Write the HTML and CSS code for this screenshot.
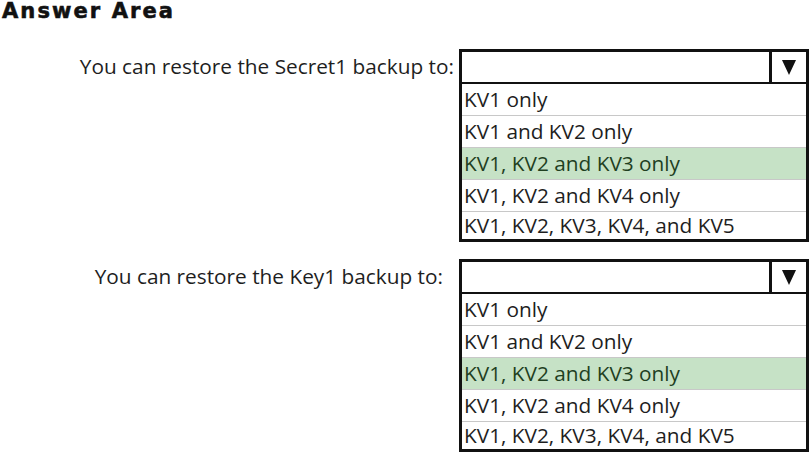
FILE: index.html
```html
<!DOCTYPE html>
<html>
<head>
<meta charset="utf-8">
<link rel="stylesheet" href="styles.css">
</head>
<body>
<div class="page">
  <h1 class="title">Answer Area</h1>
  <div class="row row-first">
    <div class="label label-1">You can restore the Secret1 backup to:</div>
    <div class="box">
      <div class="head">
        <div class="head-field"></div>
        <div class="head-btn"><span class="tri"></span></div>
      </div>
      <div class="opt">KV1 only</div>
      <div class="opt">KV1 and KV2 only</div>
      <div class="opt sel">KV1, KV2 and KV3 only</div>
      <div class="opt">KV1, KV2 and KV4 only</div>
      <div class="opt last">KV1, KV2, KV3, KV4, and KV5</div>
    </div>
  </div>
  <div class="row row-second">
    <div class="label label-2">You can restore the Key1 backup to:</div>
    <div class="box">
      <div class="head">
        <div class="head-field"></div>
        <div class="head-btn"><span class="tri"></span></div>
      </div>
      <div class="opt">KV1 only</div>
      <div class="opt">KV1 and KV2 only</div>
      <div class="opt sel">KV1, KV2 and KV3 only</div>
      <div class="opt">KV1, KV2 and KV4 only</div>
      <div class="opt last">KV1, KV2, KV3, KV4, and KV5</div>
    </div>
  </div>
</div>
</body>
</html>
```

FILE: styles.css
```css
html, body {
  margin: 0;
  padding: 0;
  background: #ffffff;
}
.page {
  width: 811px;
  height: 455px;
  overflow: hidden;
  font-family: "Open Sans", "Noto Sans", sans-serif;
  color: #1e1e1e;
}
.title {
  margin: 0;
  padding: 0 0 0 2px;
  height: 24px;
  font-family: "DejaVu Sans", sans-serif;
  font-weight: bold;
  font-size: 21px;
  line-height: 22px;
  letter-spacing: 2.1px;
  color: #111;
  -webkit-text-stroke: 0.6px #111;
}
.row {
  display: flex;
  align-items: flex-start;
}
.row-first {
  margin-top: 25px;
}
.row-second {
  margin-top: 17px;
}
.label {
  width: 459px;
  box-sizing: border-box;
  text-align: right;
  font-size: 20.8px;
  line-height: 34px;
  color: #1e1e1e;
}
.label-1 {
  padding-right: 5px;
}
.label-2 {
  padding-right: 16px;
}
.box {
  width: 350px;
  box-sizing: border-box;
  border: 3px solid #111;
  background: #fff;
}
.head {
  display: flex;
  height: 30px;
  border-bottom: 2px solid #111;
}
.head-field {
  flex: 1;
}
.head-btn {
  width: 37px;
  border-left: 3px solid #111;
  display: flex;
  justify-content: center;
  padding-top: 8px;
  box-sizing: border-box;
}
.tri {
  width: 0;
  height: 0;
  border-left: 7px solid transparent;
  border-right: 7px solid transparent;
  border-top: 15px solid #111;
}
.opt {
  height: 32px;
  box-sizing: border-box;
  border-bottom: 1px solid #c8c8c8;
  padding-left: 2px;
  font-size: 20.8px;
  line-height: 31px;
  color: #1e1e1e;
  white-space: nowrap;
}
.opt.sel {
  background: #c6e2c6;
  color: #1f3f1f;
}
.opt.last {
  border-bottom: none;
  height: 27px;
  line-height: 27px;
}
```
